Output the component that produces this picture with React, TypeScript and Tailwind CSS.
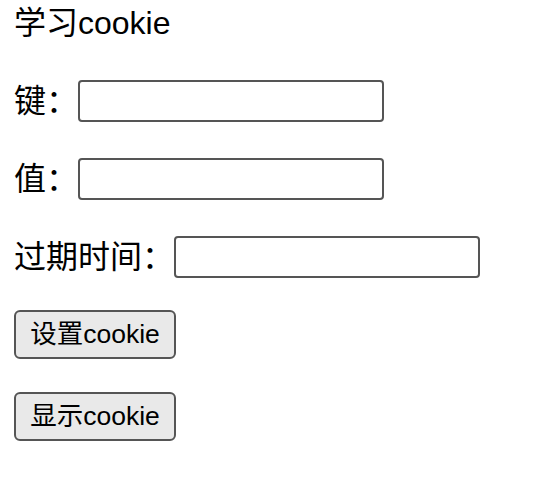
export default function App() {
  const rows = ["键：", "值：", "过期时间："];
  return (
    <main
      className="flex flex-col bg-white pl-[14px] text-black"
      style={{ fontFamily: '"Liberation Sans", "Noto Sans CJK SC", sans-serif' }}
    >
      <h1 className="flex h-[46px] items-center text-[32px] font-normal">学习cookie</h1>

      <div className="mt-[34px] flex flex-col gap-[36px]">
        {rows.map((label) => (
          <div key={label} className="flex h-[42px] items-center text-[32px]">
            <span>{label}</span>
            <input
              type="text"
              className="h-[42px] w-[306px] rounded-[4px] border-2 border-[#555555] bg-white px-2 text-[26px] outline-none"
            />
          </div>
        ))}
      </div>

      <div className="mt-[32px] flex flex-col items-start gap-[33px]">
        <button className="flex h-[49px] w-[162px] items-center justify-center rounded-[6px] border-2 border-[#555555] bg-[#e9e9e9] text-[26.5px]">
          设置cookie
        </button>
        <button className="flex h-[49px] w-[162px] items-center justify-center rounded-[6px] border-2 border-[#555555] bg-[#e9e9e9] text-[26.5px]">
          显示cookie
        </button>
      </div>
    </main>
  );
}
